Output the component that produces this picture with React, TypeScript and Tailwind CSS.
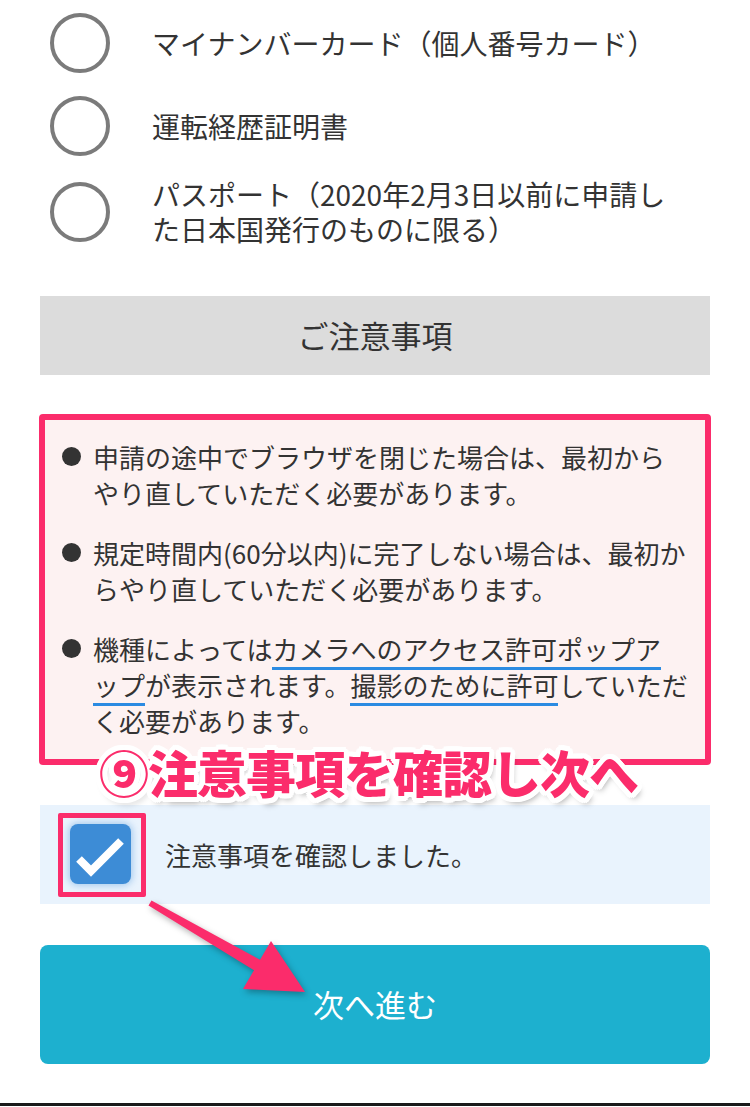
import React from "react";

const FONT = {
  fontFamily: '"Noto Sans CJK JP", "Noto Sans", sans-serif',
};

function Radio({ children, className = "" }: { children: React.ReactNode; className?: string }) {
  return (
    <div className={`flex items-center pl-[10px] gap-[42px] ${className}`}>
      <div className="w-[60px] h-[60px] shrink-0 rounded-full border-[4px] border-[#7b7b7b] bg-white" />
      <div className="text-[28px] leading-[35px] text-[#333] whitespace-nowrap">{children}</div>
    </div>
  );
}

function Bullet({ children, className = "" }: { children: React.ReactNode; className?: string }) {
  return (
    <li className={`flex gap-[12px] ${className}`}>
      <span className="mt-[8px] w-[19px] h-[19px] shrink-0 rounded-full bg-[#333]" />
      <div className="text-[26px] leading-[36px] text-[#333] whitespace-nowrap">{children}</div>
    </li>
  );
}

function U({ children }: { children: React.ReactNode }) {
  return <span className="border-b-[3px] border-[#2b8be2]">{children}</span>;
}

const OUTLINE =
  "[text-shadow:5px_0_0_#fff,-5px_0_0_#fff,0_5px_0_#fff,0_-5px_0_#fff,3.5px_3.5px_0_#fff,-3.5px_3.5px_0_#fff,3.5px_-3.5px_0_#fff,-3.5px_-3.5px_0_#fff,4.6px_1.9px_0_#fff,-4.6px_1.9px_0_#fff,4.6px_-1.9px_0_#fff,-4.6px_-1.9px_0_#fff,1.9px_4.6px_0_#fff,-1.9px_4.6px_0_#fff,1.9px_-4.6px_0_#fff,-1.9px_-4.6px_0_#fff,3px_6px_6px_rgba(0,0,0,0.35)]";

export default function App() {
  return (
    <div className="relative w-[750px] h-[1107px] bg-white overflow-hidden text-[#333]" style={FONT}>
      <div className="px-10">
        <div className="pt-[13px] flex flex-col">
          <Radio className="h-[60px]">マイナンバーカード（個人番号カード）</Radio>
          <Radio className="h-[60px] mt-[23px]">運転経歴証明書</Radio>
          <Radio className="h-[70px] mt-[21px]">
            パスポート（2020年2月3日以前に申請し
            <br />
            た日本国発行のものに限る）
          </Radio>
        </div>

        <div className="mt-[49px] h-[79px] bg-[#dcdcdc] flex items-center justify-center text-[31px] text-[#333]">
          ご注意事項
        </div>

        <div className="relative mt-[39px] -mx-px">
          <div className="border-[6px] border-[#fb2c6b] rounded-[4px] bg-[#fdf2f2] pt-[19px] pb-[20px] pl-[17px] pr-[10px]">
            <ul>
              <Bullet>
                申請の途中でブラウザを閉じた場合は、最初から
                <br />
                やり直していただく必要があります。
              </Bullet>
              <Bullet className="mt-[24px]">
                規定時間内(60分以内)に完了しない場合は、最初か
                <br />
                らやり直していただく必要があります。
              </Bullet>
              <Bullet className="mt-[24px]">
                機種によっては<U>カメラへのアクセス許可ポップア</U>
                <br />
                <U>ップ</U>が表示されます。<U>撮影のために許可</U>していただ
                <br />
                く必要があります。
              </Bullet>
            </ul>
          </div>
          <div
            className={`absolute left-[60px] top-[332px] text-[50px] leading-[50px] tracking-[-1px] font-black text-[#fb2c6b] whitespace-nowrap ${OUTLINE}`}
          >
            ⑨注意事項を確認し次へ
          </div>
        </div>

        <div className="mt-[40px] h-[99px] bg-[#e9f3fd] flex items-center pl-[18px] gap-[19px]">
          <div className="border-[5px] border-[#fb2c6b] rounded-[2px] pt-[6px] pb-[8px] pl-[7px] pr-[10px]">
            <div className="w-[61px] h-[60px] rounded-[8px] bg-[#3d8cd6] shadow-[0_0_6px_2px_rgba(61,140,214,0.35)] flex items-center justify-center">
              <svg width="61" height="60" viewBox="0 0 61 60">
                <polyline
                  points="9,35 21,47 51,17"
                  fill="none"
                  stroke="#fff"
                  strokeWidth="8"
                  strokeLinecap="butt"
                  strokeLinejoin="miter"
                />
              </svg>
            </div>
          </div>
          <div className="text-[26px] text-[#333]">注意事項を確認しました。</div>
        </div>

        <div className="mt-[41px] h-[119px] rounded-[8px] bg-[#1db0cf] flex items-center justify-center text-white text-[31px]">
          次へ進む
        </div>
      </div>

      <div className="mt-[39px] h-[3px] w-full bg-[#1a1a1a]" />

      <svg
        className="absolute left-[140px] top-[893px] drop-shadow-[2px_3px_3px_rgba(0,0,0,0.3)]"
        width="175"
        height="110"
        viewBox="140 893 175 110"
      >
        <polygon
          points="151.5,900.4 260,959.8 271,941 305,992 243,989 254,970.2 148.5,905.6"
          fill="#fb2c6b"
        />
      </svg>
    </div>
  );
}
